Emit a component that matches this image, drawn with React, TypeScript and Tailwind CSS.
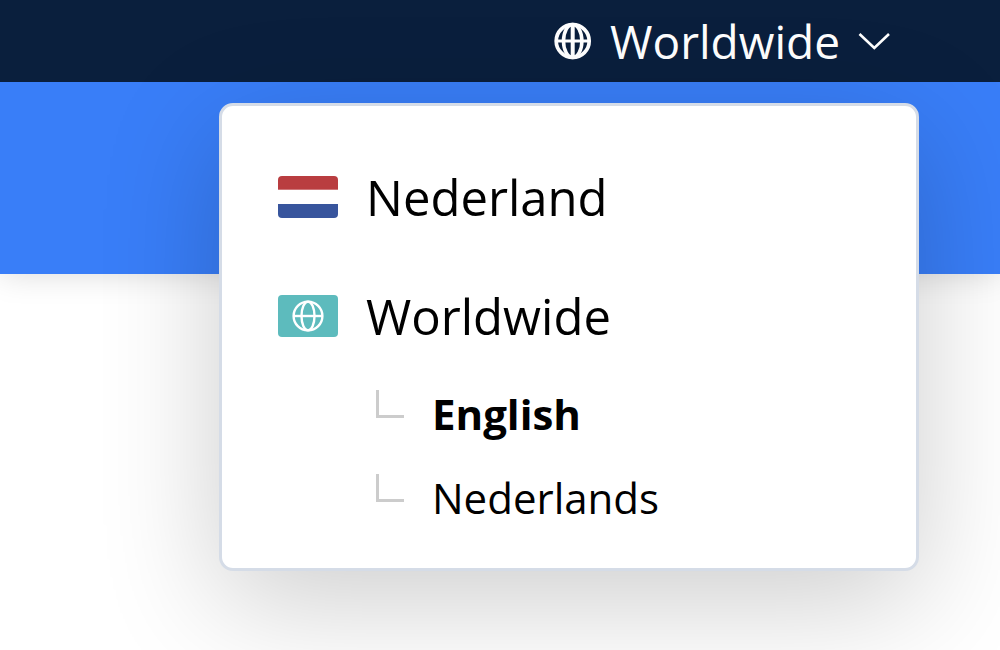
import React, { useState } from "react";

const HeaderGlobe = () => (
  <svg
    className="mr-[18px] size-[38px]"
    viewBox="0 0 38 38"
    fill="none"
    stroke="currentColor"
    aria-hidden="true"
  >
    <circle cx="18.7" cy="19" r="16.5" strokeWidth="3.7" />
    <ellipse cx="18.7" cy="19" rx="9.2" ry="16.5" strokeWidth="3.5" />
    <path d="M18.7 2v34" strokeWidth="4" />
    <path d="M2 19h34" strokeWidth="2.8" />
  </svg>
);

const FlagGlobe = () => (
  <svg
    className="size-8"
    viewBox="0 0 32 32"
    fill="none"
    stroke="currentColor"
    strokeWidth="2.4"
    aria-hidden="true"
  >
    <circle cx="16" cy="16" r="14.4" />
    <ellipse cx="16" cy="16" rx="6.5" ry="14.4" />
    <path d="M2 16h28" />
  </svg>
);

const DutchFlag = () => (
  <svg className="h-[42px] w-[60px] shrink-0 rounded" viewBox="0 0 60 42" aria-hidden="true">
    <rect width="60" height="42" fill="#fff" />
    <rect width="60" height="13.7" fill="#b93d40" />
    <rect y="28" width="60" height="14" fill="#38559d" />
  </svg>
);

const languages = ["English", "Nederlands"];

const App = () => {
  const [open, setOpen] = useState<boolean>(true);
  const [selected, setSelected] = useState<string>("English");

  return (
    <div className="min-h-screen overflow-hidden bg-white font-['Open_Sans',sans-serif] text-black">
      <header className="relative">
        <div className="relative flex h-[82px] items-center justify-end bg-[#0a1f3d] pr-[110px]">
          <button
            type="button"
            aria-expanded={open}
            onClick={() => setOpen(!open)}
            className="flex items-center text-[46px] leading-[62px] text-white"
          >
            <HeaderGlobe />
            Worldwide
            <svg
              className="ml-[18px] h-5 w-8"
              viewBox="0 0 32 20"
              fill="none"
              stroke="currentColor"
              strokeWidth="2.6"
              aria-hidden="true"
            >
              <path d="M1.5 3L16.3 17L31 3" />
            </svg>
          </button>
        </div>
        <div className="h-48 bg-[#397ef8] shadow-[0_0_30px_rgba(0,0,0,0.15)]" />

        {open && (
          <nav className="absolute top-[103px] right-[81px] w-[700px] rounded-[14px] border-[3px] border-[#d5dce7] bg-white px-14 pt-[59px] pb-[18px] shadow-[0_30px_120px_rgba(0,0,0,0.2)]">
            <a href="#nederland" className="flex items-center gap-7 text-[49px] leading-[64px]">
              <DutchFlag />
              Nederland
            </a>
            <a href="#worldwide" className="mt-[55px] flex items-center gap-7 text-[49px] leading-[64px]">
              <span className="flex h-[42px] w-[60px] shrink-0 items-center justify-center rounded bg-[#5dbbbd] text-white">
                <FlagGlobe />
              </span>
              Worldwide
            </a>
            <ul className="mt-[34px] pl-[98px]">
              {languages.map((language) => (
                <li key={language} className="flex h-[84px] items-start gap-7">
                  <span className="mt-2 size-7 border-b-[3px] border-l-[3px] border-[#ccc]" />
                  <a
                    href={`#${language.toLowerCase()}`}
                    onClick={() => setSelected(language)}
                    className={
                      selected === language
                        ? "text-[42px] leading-[64px] font-bold"
                        : "text-[42px] leading-[64px]"
                    }
                  >
                    {language}
                  </a>
                </li>
              ))}
            </ul>
          </nav>
        )}
      </header>
    </div>
  );
};

export default App;
